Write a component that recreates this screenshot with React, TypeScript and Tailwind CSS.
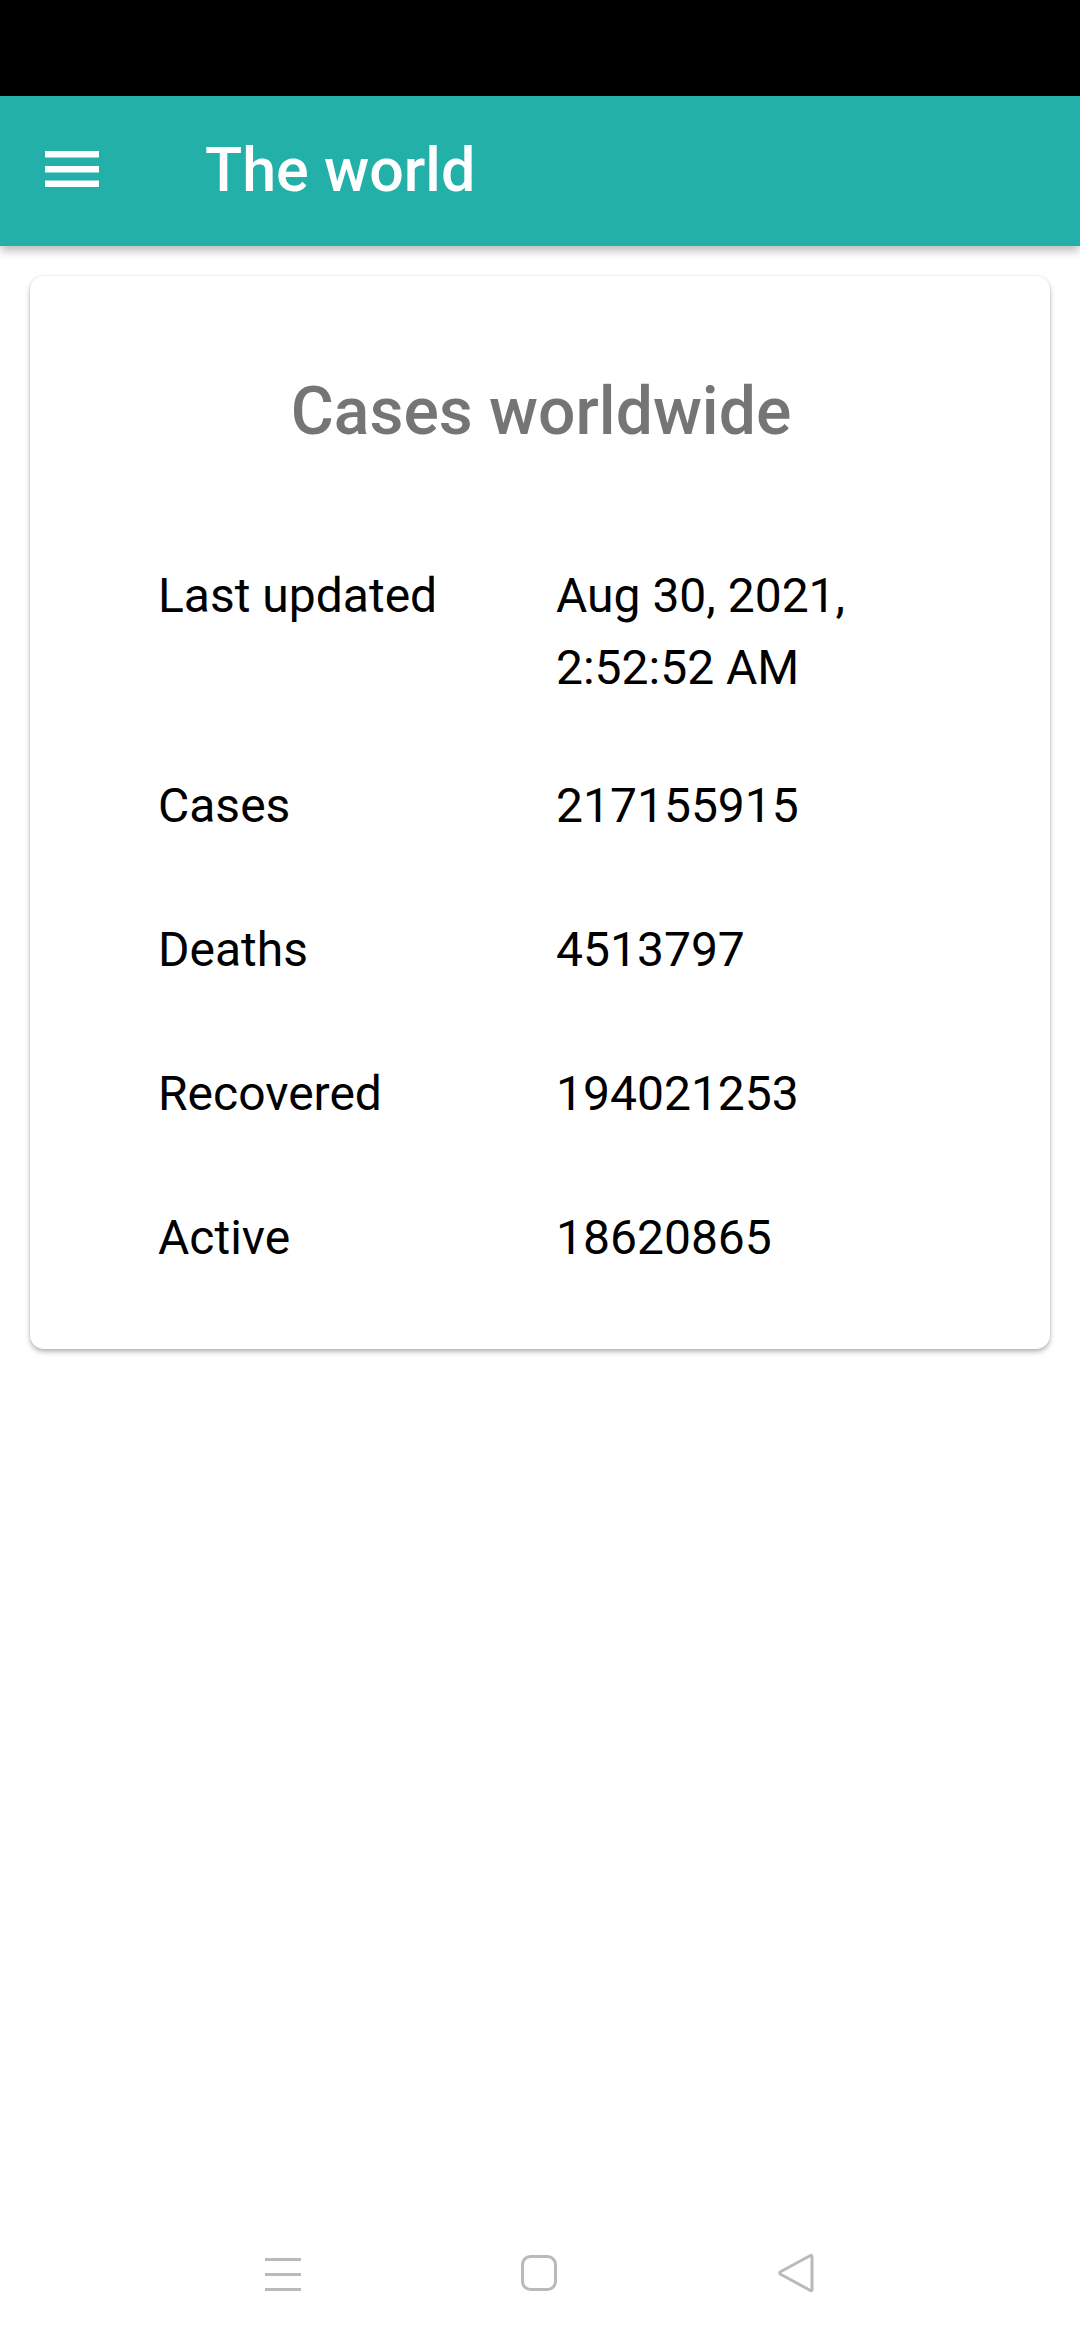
const rows = [
  { label: 'Last updated', value: 'Aug 30, 2021, 2:52:52 AM', gap: 'mt-[115px]' },
  { label: 'Cases', value: '217155915', gap: 'mt-[66px]' },
  { label: 'Deaths', value: '4513797', gap: 'mt-[72px]' },
  { label: 'Recovered', value: '194021253', gap: 'mt-[72px]' },
  { label: 'Active', value: '18620865', gap: 'mt-[72px]' },
];

const NavBar = () => (
  <div className="h-[134px] flex items-center justify-center gap-[220px] bg-white">
    <svg width="36" height="36" viewBox="0 0 36 36" className="text-[#bababa]">
      <rect x="0" y="3" width="36" height="3" fill="currentColor" />
      <rect x="0" y="18" width="36" height="3" fill="currentColor" />
      <rect x="0" y="33" width="36" height="3" fill="currentColor" />
    </svg>
    <svg width="36" height="36" viewBox="0 0 36 36" className="text-[#bababa]">
      <rect x="1.5" y="1.5" width="33" height="33" rx="8" fill="none" stroke="currentColor" strokeWidth="3" />
    </svg>
    <svg width="38" height="40" viewBox="0 0 38 40" className="text-[#bababa]">
      <path
        d="M35 3.5 L35 36.5 Q35 38.5 33 37.2 L3.5 21.3 Q1.8 20 3.5 18.7 L33 2.8 Q35 1.5 35 3.5 Z"
        fill="none"
        stroke="currentColor"
        strokeWidth="3"
        strokeLinejoin="round"
      />
    </svg>
  </div>
);

export default function App() {
  return (
    <div className="h-[2340px] w-[1080px] flex flex-col bg-white font-['Roboto',sans-serif]">
      <div className="h-[96px] bg-black shrink-0" />

      <header className="h-[150px] shrink-0 bg-[#22b0a9] flex items-center shadow-[0_4px_10px_rgba(0,0,0,0.3)] relative z-10">
        {/* nav menu icon, flat bars */}
        <svg width="54" height="36" viewBox="0 0 54 36" className="ml-[45px] -mt-[4px] text-white">
          <rect x="0" y="0" width="54" height="6.5" fill="currentColor" />
          <rect x="0" y="15" width="54" height="6.5" fill="currentColor" />
          <rect x="0" y="29.5" width="54" height="6.5" fill="currentColor" />
        </svg>
        <h1 className="ml-[106px] text-white text-[61px] font-medium leading-none -mt-[2px]">The world</h1>
      </header>

      <main className="flex-1 px-[30px] pt-[30px]">
        <div className="bg-white rounded-[14px] shadow-[0_3px_5px_rgba(0,0,0,0.28),0_0_3px_rgba(0,0,0,0.08)] pl-[128px] pr-[120px] pt-[103px] pb-[75px]">
          <h2 className="text-center text-[#757575] text-[66px] font-medium leading-[66px] pr-[6px]">Cases worldwide</h2>
          {rows.map((r) => (
            <div key={r.label} className={`${r.gap} grid grid-cols-[398px_1fr] text-[48px] leading-[72px] text-black`}>
              <div>{r.label}</div>
              <div>{r.value}</div>
            </div>
          ))}
        </div>
      </main>

      <NavBar />
    </div>
  );
}
